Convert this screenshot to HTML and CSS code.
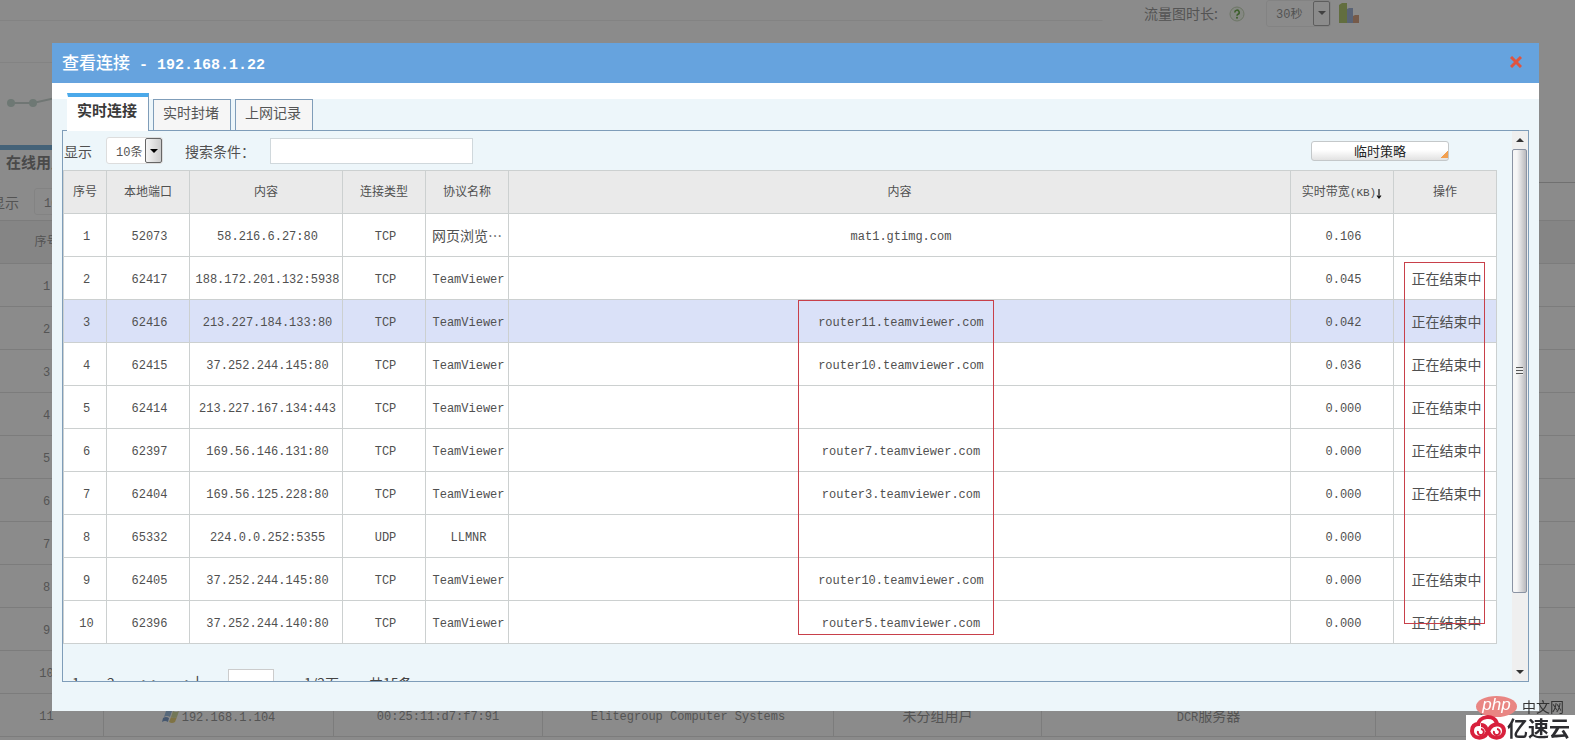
FILE: index.html
```html
<!DOCTYPE html>
<html lang="zh-CN">
<head>
<meta charset="utf-8">
<title>查看连接</title>
<link rel="stylesheet" href="styles.css">
</head>
<body>
<div class="page">
  <header class="chart-tools">
    <label for="span">流量图时长:</label>
    <svg class="help" viewBox="0 0 16 16"><circle cx="8" cy="8" r="7" fill="#f2f7ee" stroke="#c5d6b9"/><path d="M5.8 6.4a2.2 2.2 0 1 1 3.2 1.9c-.7.4-1 .7-1 1.4" fill="none" stroke="#6fae50" stroke-width="1.6"/><circle cx="8" cy="11.8" r="1" fill="#6fae50"/></svg>
    <span class="pick pick-wide"><select id="span"><option>30秒</option></select><i class="pick-arrow"></i></span>
    <svg class="bars" viewBox="0 0 20 20"><path d="M0 2l3-2h5v20H0z" fill="#b3c873"/><path d="M8 6l2-1h4v15H8z" fill="#a3b4d8"/><path d="M14 13l2-1h4v8h-6z" fill="#d8a585"/></svg>
  </header>
  <section class="chart">
    <svg class="trend" viewBox="0 0 60 20"><path d="M8 10H33L60 4" fill="none" stroke="#ccd8d3" stroke-width="2"/><circle cx="11" cy="10" r="4" fill="#c8dbd3"/><circle cx="33" cy="10" r="4" fill="#c8dbd3"/></svg>
  </section>
  <section class="users">
    <div class="users-head"><h2>在线用户</h2></div>
    <div class="users-tools"><label for="ucount">显示</label><span class="pick"><select id="ucount"><option>10条</option></select><i class="pick-arrow"></i></span></div>
    <table class="user-table">
      <colgroup><col class="u1"><col class="u2"><col class="u3"><col class="u4"><col class="u5"><col class="u6"><col></colgroup>
      <tr><th>序号</th><th></th><th></th><th></th><th></th><th></th><th></th></tr>
      <tr><td>1</td><td></td><td></td><td></td><td></td><td></td><td></td></tr>
      <tr><td>2</td><td></td><td></td><td></td><td></td><td></td><td></td></tr>
      <tr><td>3</td><td></td><td></td><td></td><td></td><td></td><td></td></tr>
      <tr><td>4</td><td></td><td></td><td></td><td></td><td></td><td></td></tr>
      <tr><td>5</td><td></td><td></td><td></td><td></td><td></td><td></td></tr>
      <tr><td>6</td><td></td><td></td><td></td><td></td><td></td><td></td></tr>
      <tr><td>7</td><td></td><td></td><td></td><td></td><td></td><td></td></tr>
      <tr><td>8</td><td></td><td></td><td></td><td></td><td></td><td></td></tr>
      <tr><td>9</td><td></td><td></td><td></td><td></td><td></td><td></td></tr>
      <tr><td>10</td><td></td><td></td><td></td><td></td><td></td><td></td></tr>
      <tr><td>11</td><td><svg class="win" viewBox="0 0 18 14"><path d="M4 2q3-2 6 0l-2 6q-3-2-6 0z" fill="#9fbfe0"/><path d="M11 2q3 2 6 0l-2 6q-3 2-6 0z" fill="#d2dba0"/><path d="M1 9q3-2 6 0l-1 4q-3-2-6 0z" fill="#7f9fca"/><path d="M9 8q3 2 6 0l-2 5q-3 2-6 0z" fill="#e8d27c"/></svg>192.168.1.104</td><td>00:25:11:d7:f7:91</td><td>Elitegroup Computer Systems</td><td class="cjk">未分组用户</td><td class="mixed">DCR<span class="cjk">服务器</span></td><td><a href="#">0</a></td></tr>
    </table>
  </section>
</div>

<div class="overlay">
  <div class="modal" role="dialog" aria-labelledby="title">
    <div class="modal-head">
      <h1 id="title">查看连接<b> - 192.168.1.22</b></h1>
      <button class="close" aria-label="关闭"><svg viewBox="0 0 12 12"><path d="M1 1L11 11M11 1L1 11" stroke="#e0543f" stroke-width="3"/></svg></button>
    </div>
    <div class="modal-body">
      <nav class="tabs">
        <button class="tab active">实时连接</button>
        <button class="tab">实时封堵</button>
        <button class="tab">上网记录</button>
      </nav>
      <div class="panel">
        <div class="content">
          <div class="tools">
            <label for="count">显示</label>
            <span class="pick"><select id="count"><option>10条</option></select><i class="pick-arrow"></i></span>
            <label class="search-label" for="search">搜索条件：</label>
            <input class="search" id="search" type="text">
            <button class="policy">临时策略</button>
          </div>
          <table class="conn">
            <colgroup><col class="c1"><col class="c2"><col class="c3"><col class="c2"><col class="c2"><col><col class="c7"><col class="c7"></colgroup>
            <thead><tr><th>序号</th><th>本地端口</th><th>内容</th><th>连接类型</th><th>协议名称</th><th>内容</th><th class="sort">实时带宽<small>(KB)</small><svg class="down" viewBox="0 0 6 10"><path d="M3 0V9M1 6.500L3 9L5 6.500" fill="none" stroke="#111" stroke-width="1.200"/></svg></th><th>操作</th></tr></thead>
            <tbody>
            <tr><td>1</td><td>52073</td><td>58.216.6.27:80</td><td>TCP</td><td class="cjk app">网页浏览…</td><td>mat1.gtimg.com</td><td>0.106</td><td></td></tr>
            <tr><td>2</td><td>62417</td><td>188.172.201.132:5938</td><td>TCP</td><td>TeamViewer</td><td></td><td>0.045</td><td class="cjk">正在结束中</td></tr>
            <tr class="hover"><td>3</td><td>62416</td><td>213.227.184.133:80</td><td>TCP</td><td>TeamViewer</td><td>router11.teamviewer.com</td><td>0.042</td><td class="cjk">正在结束中</td></tr>
            <tr><td>4</td><td>62415</td><td>37.252.244.145:80</td><td>TCP</td><td>TeamViewer</td><td>router10.teamviewer.com</td><td>0.036</td><td class="cjk">正在结束中</td></tr>
            <tr><td>5</td><td>62414</td><td>213.227.167.134:443</td><td>TCP</td><td>TeamViewer</td><td></td><td>0.000</td><td class="cjk">正在结束中</td></tr>
            <tr><td>6</td><td>62397</td><td>169.56.146.131:80</td><td>TCP</td><td>TeamViewer</td><td>router7.teamviewer.com</td><td>0.000</td><td class="cjk">正在结束中</td></tr>
            <tr><td>7</td><td>62404</td><td>169.56.125.228:80</td><td>TCP</td><td>TeamViewer</td><td>router3.teamviewer.com</td><td>0.000</td><td class="cjk">正在结束中</td></tr>
            <tr><td>8</td><td>65332</td><td>224.0.0.252:5355</td><td>UDP</td><td>LLMNR</td><td></td><td>0.000</td><td></td></tr>
            <tr><td>9</td><td>62405</td><td>37.252.244.145:80</td><td>TCP</td><td>TeamViewer</td><td>router10.teamviewer.com</td><td>0.000</td><td class="cjk">正在结束中</td></tr>
            <tr><td>10</td><td>62396</td><td>37.252.244.140:80</td><td>TCP</td><td>TeamViewer</td><td>router5.teamviewer.com</td><td>0.000</td><td class="cjk">正在结束中</td></tr>
            </tbody>
          </table>
          <div class="pager">
            <a href="#">1</a><a href="#">2</a><a class="jump" href="#">&gt;&gt;</a><a class="jump" href="#">&gt;|</a>
            <input type="text" aria-label="页码"><span>1/2页</span><span>共15条</span>
          </div>
          <div class="mark mark-hosts"></div>
          <div class="mark mark-actions"></div>
        </div>
        <div class="scroll">
          <i class="arrow up"></i>
          <div class="thumb"><i class="grip"></i></div>
          <i class="arrow dn"></i>
        </div>
      </div>
    </div>
  </div>
</div>

<div class="brands">
  <div class="php"><span class="php-oval">php</span><span>中文网</span></div>
  <div class="yisu">
    <svg viewBox="0 0 36 26"><g fill="none" stroke="#d8203c" stroke-width="4"><path d="M9 9C3 9 2 13 2 16c0 8 12 9 15 2l3-5c4-6 14-4 14 3 0 8-12 9-15 2l-3-5c-1-2-3-3-5-3"/><path d="M8 11C8 0 25-1 27 9"/><path d="M8 16a3 3 0 1 0 3-2M24 16a3 3 0 1 0 3-2" stroke-width="2"/></g></svg>
    <span>亿速云</span>
  </div>
</div>
</body>
</html>
```

FILE: styles.css
```css
* { box-sizing: border-box; }
body, button, input, select {
  font-family: "Liberation Mono", "Noto Sans CJK SC", monospace;
  font-size: 12px;
}
body { margin: 0; height: 100vh; overflow: hidden; background: #fefefe; color: #505050; }
h1, h2 { margin: 0; }
label, .cjk, .tab, .pager { font-size: 14px; font-family: "Noto Sans CJK SC", sans-serif; }
table { border-collapse: collapse; table-layout: fixed; width: 100%; }
td, th { height: 43px; padding: 0; text-align: center; font-weight: normal; white-space: nowrap; }
th { padding-bottom: 2px; }
td { padding-top: 3px; }
td.cjk { padding-top: 0; padding-bottom: 1px; }
a { color: inherit; }

/* dashboard behind the dialog */
.page { color: #999; height: 100vh; overflow: hidden; background: linear-gradient(#eee, #eee) 0 20px / 70% 1px no-repeat; }
.chart-tools { display: flex; align-items: center; justify-content: flex-end; height: 26px; padding-right: 216px; }
.help { width: 16px; height: 16px; margin: 2px 21px 0 11px; }
.bars { width: 20px; height: 20px; margin-left: 8px; }
.chart { height: 119px; padding-top: 67px; background: linear-gradient(#eee, #eee) 0 36px / 70% 1px no-repeat; }
.trend { display: block; width: 60px; height: 20px; }
.users-head { display: flex; height: 38px; border-bottom: 1px solid #ccc; }
.users h2 { width: 120px; height: 38px; padding: 0 6px; font: bold 15px/24px "Noto Sans CJK SC", sans-serif; color: #888; background: #fefefe; border-top: 5px solid #7cb2da; }
.users-tools { display: flex; align-items: center; gap: 15px; height: 37px; margin-left: -9px; }
.user-table { width: 1603px; margin-left: -11px; }
.user-table td, .user-table th { border: 1px solid #e2e2e2; }
.user-table th { background: #f3f3f3; }
.user-table .mixed { padding-top: 0; font-size: 12px; }
.u1 { width: 114px; } .u2 { width: 230px; } .u3 { width: 209px; } .u4 { width: 291px; } .u5 { width: 208px; } .u6 { width: 334px; }
.win { width: 18px; height: 14px; margin-right: 2px; vertical-align: -2px; }

/* drop-down */
.pick { display: flex; width: 57px; height: 27px; background: #fff; border: 1px solid #ddd; border-radius: 3px; }
.pick select { flex: 1; min-width: 0; padding: 4px 0 0 9px; border: 0; background: none; color: #555; appearance: none; }
.pick-arrow { display: flex; align-items: center; justify-content: center; width: 17px; background: linear-gradient(90deg, #f5f5f5, #ccc); border: 1px solid #666; border-radius: 2px; }
.pick-arrow::before { content: ""; border: 4px solid transparent; border-top-color: #000; border-bottom: 0; }
.pick-wide { width: 65px; }
.page .pick { border-color: #eee; background: none; }
.page .pick select { color: #999; }
.page .pick-arrow { background: none; border-color: #aaa; }
.page .pick-arrow::before { border-top-color: #777; }

/* dialog */
.overlay { position: fixed; inset: 0; display: flex; padding: 43px 36px 29px 52px; background: rgba(0, 0, 0, .45); }
.modal { flex: 1; display: flex; flex-direction: column; min-width: 0; background: #edf6fa; }
.modal-head { display: flex; align-items: center; justify-content: space-between; height: 40px; padding: 0 17px 2px 10px; background: #66a3de; }
.modal-head h1 { font: 500 17px/38px "Noto Sans CJK SC", sans-serif; color: #fff; white-space: pre; }
.modal-head b { font: bold 15px "Liberation Mono", monospace; }
.close { display: flex; padding: 0; border: 0; background: none; }
.close svg { width: 12px; height: 12px; }
.modal-body { flex: 1; display: flex; flex-direction: column; min-height: 0; padding: 10px 10px 29px; background: linear-gradient(#fff 16px, transparent 16px); }
.tabs { display: flex; align-items: flex-end; gap: 4px; height: 37px; padding-left: 5px; }
.tab { width: 78px; height: 31px; padding: 0 2px 6px 0; background: #f6f6f6; border: 1px solid #7f9db9; border-bottom: 0; color: #555; }
.tab.active { z-index: 1; width: 82px; height: 38px; margin-bottom: -1px; padding-bottom: 9px; font-size: 15px; font-weight: bold; color: #3a3a3a; background: #fff; border-top: 4px solid #4ba9ea; border-left-color: #fff; }
.panel { flex: 1; display: flex; min-height: 0; border: 1px solid #7f9db9; overflow: hidden; }
.content { position: relative; flex: 1; min-width: 0; padding-right: 15px; }
.tools { display: flex; align-items: center; height: 39px; padding: 0 48px 0 1px; }
.tools .pick { margin-left: 14px; }
.search-label { margin-left: 22px; width: 85px; }
.search { width: 203px; height: 26px; border: 1px solid #d0d8dc; background: #fff; }
.policy { width: 138px; height: 20px; margin-left: auto; padding: 0; border: 1px solid #c4c8ca; border-radius: 3px; font: 13px/17px "Noto Sans CJK SC", sans-serif; color: #222; background: linear-gradient(135deg, transparent 50%, #f2a050 50%) right 0 bottom 2px / 7px 7px no-repeat, linear-gradient(#fff 45%, #e2e2e2); }
.conn th, .conn td { border: 1px solid #ccd0d0; }
.conn th { background: #eaeaea; }
.conn td { background: #fff; padding-left: 3px; }
.conn td.app { padding-left: 0; }
.conn .hover td { background: #dae1f8; }
.conn small { font-size: 11px; }
.down { width: 6px; height: 10px; vertical-align: -3px; }
.c1 { width: 43px; } .c2 { width: 83px; } .c3 { width: 153px; } .c7 { width: 103px; }
.pager { display: flex; align-items: center; height: 28px; margin-top: 25px; padding-left: 9px; color: #444; }
.pager a { width: 35px; text-decoration: none; }
.pager .jump { width: 43px; font-size: 18px; line-height: 20px; }
.pager input { width: 46px; height: 28px; margin-left: 0; border: 1px solid #ccc; }
.pager span { margin-left: 30px; }

/* highlight frames */
.mark { position: absolute; border: 1px solid #c8404a; }
.mark-hosts { left: 735px; top: 169px; width: 196px; height: 335px; }
.mark-actions { right: 27px; top: 131px; width: 81px; height: 362px; }

/* scroll bar */
.scroll { display: flex; flex-direction: column; width: 16px; background: #efefef; }
.arrow { display: flex; align-items: center; justify-content: center; height: 18px; }
.arrow::before { content: ""; border: 4px solid transparent; }
.up::before { border-bottom-color: #333; border-top: 0; }
.dn::before { border-top-color: #333; border-bottom: 0; }
.thumb { flex: 1; display: flex; align-items: center; justify-content: center; margin: 0 1px 70px 0; border: 1px solid #8a93a3; border-radius: 2px; background: linear-gradient(90deg, #f6f6f6 30%, #b9b9bd); }
.grip { width: 7px; height: 8px; background: repeating-linear-gradient(#555 0 1px, #eee 1px 3px); }

/* brand badges */
.brands { position: fixed; right: 0; bottom: 0; width: 109px; }
.php { display: flex; align-items: center; gap: 5px; height: 18px; margin-left: 10px; font: 14px/18px "Noto Sans CJK SC", sans-serif; color: #333; }
.php span { white-space: nowrap; }
.php-oval { width: 41px; height: 21px; border-radius: 50%; background: #e98683; color: #fff; font: italic 17px/17px "Liberation Sans", sans-serif; text-align: center; }
.yisu { display: flex; align-items: center; gap: 1px; height: 25px; padding-left: 4px; background: #fff; font: bold 21px/25px "Noto Sans CJK SC", sans-serif; color: #2c2c30; white-space: nowrap; overflow: hidden; }
.yisu svg { flex: none; width: 36px; height: 26px; }
```
